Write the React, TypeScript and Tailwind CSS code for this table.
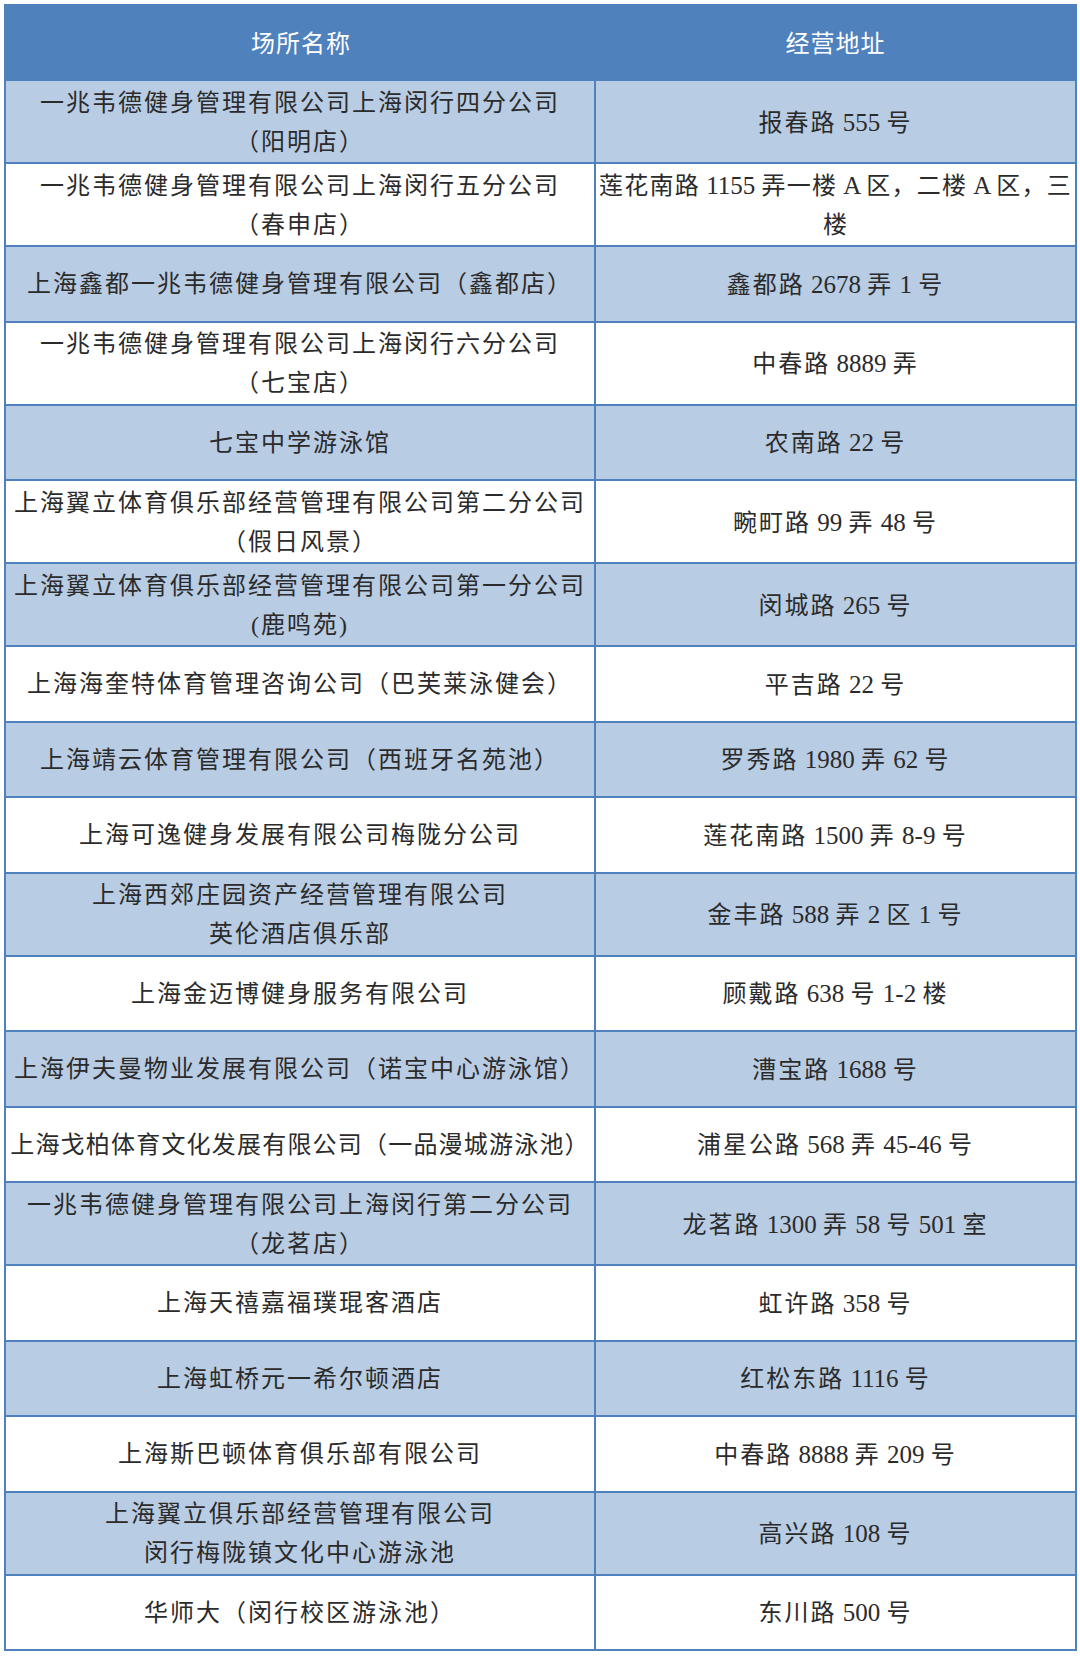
const rows: { name: string[]; addr: string[] }[] = [
  { name: ["一兆韦德健身管理有限公司上海闵行四分公司", "（阳明店）"], addr: ["报春路 555 号"] },
  { name: ["一兆韦德健身管理有限公司上海闵行五分公司", "（春申店）"], addr: ["莲花南路 1155 弄一楼 A 区，二楼 A 区，三", "楼"] },
  { name: ["上海鑫都一兆韦德健身管理有限公司（鑫都店）"], addr: ["鑫都路 2678 弄 1 号"] },
  { name: ["一兆韦德健身管理有限公司上海闵行六分公司", "（七宝店）"], addr: ["中春路 8889 弄"] },
  { name: ["七宝中学游泳馆"], addr: ["农南路 22 号"] },
  { name: ["上海翼立体育俱乐部经营管理有限公司第二分公司", "（假日风景）"], addr: ["畹町路 99 弄 48 号"] },
  { name: ["上海翼立体育俱乐部经营管理有限公司第一分公司", "(鹿鸣苑)"], addr: ["闵城路 265 号"] },
  { name: ["上海海奎特体育管理咨询公司（巴芙莱泳健会）"], addr: ["平吉路 22 号"] },
  { name: ["上海靖云体育管理有限公司（西班牙名苑池）"], addr: ["罗秀路 1980 弄 62 号"] },
  { name: ["上海可逸健身发展有限公司梅陇分公司"], addr: ["莲花南路 1500 弄 8-9 号"] },
  { name: ["上海西郊庄园资产经营管理有限公司", "英伦酒店俱乐部"], addr: ["金丰路 588 弄 2 区 1 号"] },
  { name: ["上海金迈博健身服务有限公司"], addr: ["顾戴路 638 号 1-2 楼"] },
  { name: ["上海伊夫曼物业发展有限公司（诺宝中心游泳馆）"], addr: ["漕宝路 1688 号"] },
  { name: ["上海戈柏体育文化发展有限公司（一品漫城游泳池）"], addr: ["浦星公路 568 弄 45-46 号"] },
  { name: ["一兆韦德健身管理有限公司上海闵行第二分公司", "（龙茗店）"], addr: ["龙茗路 1300 弄 58 号 501 室"] },
  { name: ["上海天禧嘉福璞琨客酒店"], addr: ["虹许路 358 号"] },
  { name: ["上海虹桥元一希尔顿酒店"], addr: ["红松东路 1116 号"] },
  { name: ["上海斯巴顿体育俱乐部有限公司"], addr: ["中春路 8888 弄 209 号"] },
  { name: ["上海翼立俱乐部经营管理有限公司", "闵行梅陇镇文化中心游泳池"], addr: ["高兴路 108 号"] },
  { name: ["华师大（闵行校区游泳池）"], addr: ["东川路 500 号"] },
];

// latin runs (numbers, letters, spaces) are set tight, CJK gets the spacing
const Text = ({ s }: { s: string }) => (
  <>
    {s.split(/([0-9A-Za-z\- ]+)/).map((part, i) =>
      /^[0-9A-Za-z\- ]+$/.test(part) ? (
        <span key={i} className="tracking-normal text-[25px] whitespace-pre">
          {part}
        </span>
      ) : (
        <span key={i}>{part}</span>
      )
    )}
  </>
);

const Lines = ({ lines, tight }: { lines: string[]; tight?: boolean }) => (
  <div className={`flex flex-col items-center leading-[39px] ${tight ? "tracking-[1.2px]" : "tracking-[2px]"}`}>
    {lines.map((l, i) => (
      <span key={i} className="whitespace-nowrap">
        <Text s={l} />
      </span>
    ))}
  </div>
);

export default function App() {
  return (
    <div
      className="w-[1080px] h-[1657px] bg-white pt-[4px] pl-[4px]"
      style={{ fontFamily: '"Liberation Serif", "Noto Sans CJK SC", serif' }}
    >
      <div className="w-[1073px] border-2 border-[#4f81bd] text-[24px] text-[#2b2b2b]">
        <div className="grid grid-cols-[590px_1fr] h-[73px] bg-[#4f81bd] text-white">
          <div className="flex items-center justify-center pt-[3px] tracking-[1px]">场所名称</div>
          <div className="flex items-center justify-center pt-[3px] tracking-[1px]">经营地址</div>
        </div>
        {rows.map((r, i) => {
          const two = r.name.length > 1 || r.addr.length > 1;
          return (
            <div
              key={i}
              className={`grid grid-cols-[590px_1fr] border-t-2 border-[#4f81bd] ${
                two ? "h-[83px]" : "h-[75.5px]"
              } ${i % 2 === 0 ? "bg-[#b8cce4]" : "bg-white"}`}
            >
              <div className="flex items-center justify-center pt-[2px] border-r-2 border-[#4f81bd]">
                <Lines lines={r.name} tight={r.name[0].length > 22} />
              </div>
              <div className="flex items-center justify-center pt-[2px]">
                <Lines lines={r.addr} tight={r.addr[0].length > 24} />
              </div>
            </div>
          );
        })}
      </div>
    </div>
  );
}
